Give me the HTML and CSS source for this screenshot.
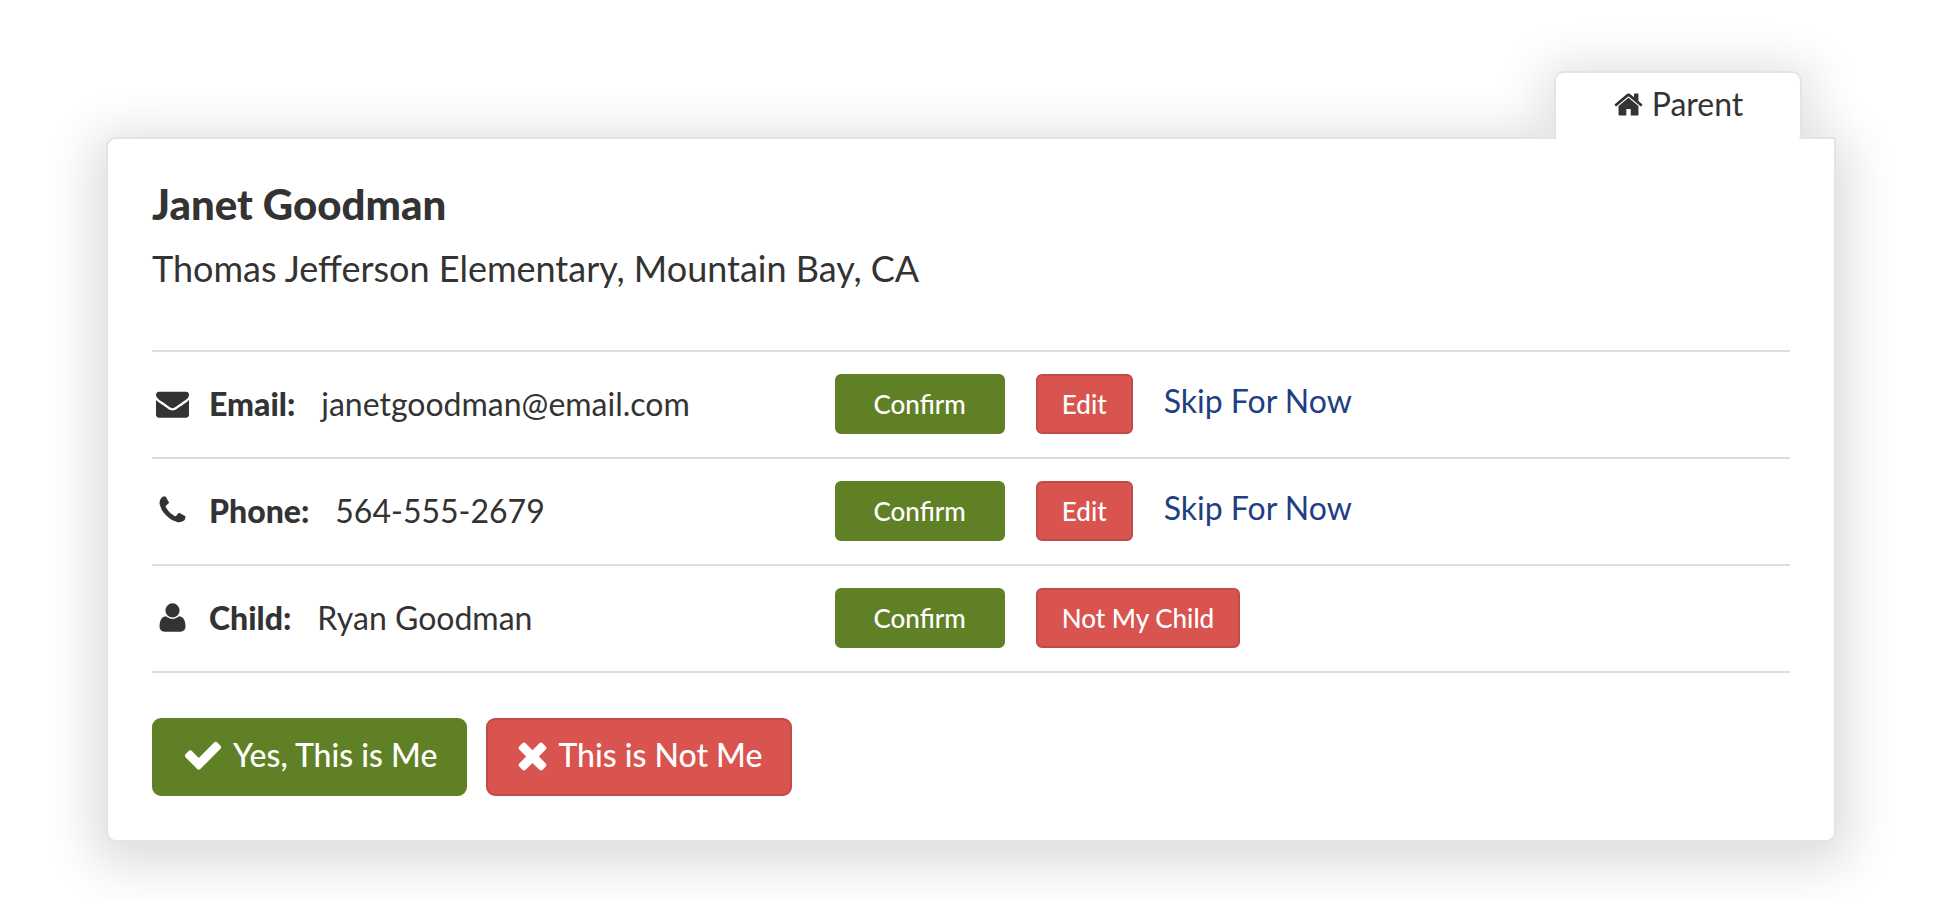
FILE: index.html
```html
<!DOCTYPE html>
<html lang="en">
<head>
<meta charset="utf-8">
<meta name="viewport" content="width=device-width, initial-scale=1">
<title>Confirm your details</title>
<link rel="stylesheet" href="styles.css">
</head>
<body>
<main class="profile">
  <section class="card">
    <h1 class="name">Janet Goodman</h1>
    <p class="school">Thomas Jefferson Elementary, Mountain Bay, CA</p>
    <ul class="details">
      <li class="row">
        <div class="field">
          <svg class="field-icon" viewBox="0 0 1792 1792" aria-hidden="true"><path d="M1792 710v794q0 66-47 113t-113 47h-1472q-66 0-113-47t-47-113v-794q44 49 101 87 362 246 497 345 57 42 92.5 65.5t94.5 48 110 24.5h2q51 0 110-24.5t94.5-48 92.5-65.5q170-123 498-345 57-39 100-87zm0-294q0 79-49 151t-122 123q-376 261-468 325-10 7-42.5 31t-54 38.5-52 32.5-57.5 27-50 9h-2q-23 0-50-9t-57.5-27-52-32.5-54-38.5-42.5-31q-91-64-262-182.5t-205-142.5q-62-42-117-115.5t-55-136.5q0-78 41.5-130t118.5-52h1472q65 0 112.5 47t47.5 113z"/></svg>
          <strong class="label">Email:</strong>
          <span>janetgoodman@email.com</span>
        </div>
        <div class="actions">
          <button class="btn btn-yes btn-wide" type="button">Confirm</button>
          <button class="btn btn-no" type="button">Edit</button>
          <a class="skip" href="#">Skip For Now</a>
        </div>
      </li>
      <li class="row">
        <div class="field">
          <svg class="field-icon" viewBox="0 0 1792 1792" aria-hidden="true"><path d="M1600 1240q0 27-10 70.5t-21 68.5q-21 50-122 106-94 51-186 51-27 0-53-3.5t-57.5-12.5-47-14.5-55.5-20.5-49-18q-98-35-175-83-127-79-264-216t-216-264q-48-77-83-175-3-9-18-49t-20.5-55.5-14.5-47-12.5-57.5-3.5-53q0-92 51-186 56-101 106-122 25-11 68.5-21t70.5-10q14 0 21 3 18 6 53 76 11 19 30 54t35 63.5 31 53.5q3 4 17.5 25t21.5 35.5 7 28.5q0 20-28.5 50t-62 55-62 53-28.5 46q0 9 5 22.5t8.5 20.5 14 24 11.5 19q76 137 174 235t235 174q2 1 19 11.5t24 14 20.5 8.5 22.5 5q18 0 46-28.5t53-62 55-62 50-28.5q14 0 28.5 7t35.5 21.5 25 17.5q25 15 53.5 31t63.5 35 54 30q70 35 76 53 3 7 3 21z"/></svg>
          <strong class="label">Phone:</strong>
          <span>564-555-2679</span>
        </div>
        <div class="actions">
          <button class="btn btn-yes btn-wide" type="button">Confirm</button>
          <button class="btn btn-no" type="button">Edit</button>
          <a class="skip" href="#">Skip For Now</a>
        </div>
      </li>
      <li class="row">
        <div class="field">
          <svg class="field-icon" viewBox="0 0 1792 1792" aria-hidden="true"><path d="M1600 1405q0 120-73 189.500t-194 69.500h-874q-121 0-194-69.500t-73-189.500q0-53 3.500-103.500t14-109 26.500-108.500 43-97.500 62-81 85.500-53.500 111.500-20q9 0 42 21.500t74.500 48 108 48 133.500 21.500 133.500-21.500 108-48 74.500-48 42-21.500q61 0 111.500 20t85.500 53.500 62 81 43 97.500 26.500 108.500 14 109 3.500 103.500zm-320-893q0 159-112.500 271.500t-271.500 112.500-271.500-112.500-112.500-271.500 112.500-271.500 271.500-112.500 271.500 112.500 112.500 271.500z"/></svg>
          <strong class="label">Child:</strong>
          <span>Ryan Goodman</span>
        </div>
        <div class="actions">
          <button class="btn btn-yes btn-wide" type="button">Confirm</button>
          <button class="btn btn-no" type="button">Not My Child</button>
        </div>
      </li>
    </ul>
    <div class="answers">
      <button class="btn btn-large btn-yes" type="button">
        <svg class="check-icon" viewBox="0 0 1792 1792" aria-hidden="true"><path d="M1671 566q0 40-28 68l-724 724-136 136q-28 28-68 28t-68-28l-136-136-362-362q-28-28-28-68t28-68l136-136q28-28 68-28t68 28l294 295 656-657q28-28 68-28t68 28l136 136q28 28 28 68z"/></svg>
        <span>Yes, This is Me</span>
      </button>
      <button class="btn btn-large btn-no" type="button">
        <svg class="cross-icon" viewBox="192 0 1408 1792" aria-hidden="true"><path d="M1490 1322q0 40-28 68l-136 136q-28 28-68 28t-68-28l-294-294-294 294q-28 28-68 28t-68-28l-136-136q-28-28-28-68t28-68l294-294-294-294q-28-28-28-68t28-68l136-136q28-28 68-28t68 28l294 294 294-294q28-28 68-28t68 28l136 136q28 28 28 68t-28 68l-294 294 294 294q28 28 28 68z"/></svg>
        <span>This is Not Me</span>
      </button>
    </div>
  </section>
  <div class="tab">
    <svg class="tab-icon" viewBox="0 0 1792 1792" aria-hidden="true"><path d="M1472 992v480q0 26-19 45t-45 19h-384v-384h-256v384h-384q-26 0-45-19t-19-45v-480q0-1 .5-3t.5-3l575-474 575 474q1 2 1 6zm223-69l-62 74q-8 9-21 11h-3q-13 0-21-7l-692-577-692 577q-12 8-24 7-13-2-21-11l-62-74q-8-10-7-23.500t11-21.500l719-599q32-26 76-26t76 26l244 204v-195q0-14 9-23t23-9h192q14 0 23 9t9 23v408l219 182q10 8 11 21.500t-7 23.500z"/></svg>
    <span>Parent</span>
  </div>
</main>
</body>
</html>
```
FILE: styles.css
```css
* {
  box-sizing: border-box;
}

body {
  margin: 0;
  padding: 71px 107px 59px 106px;
  background: #fff;
  color: #333;
  font-family: Lato, "Open Sans", sans-serif;
  font-size: 32px;
  line-height: 40px;
}

svg {
  display: block;
  flex: none;
  fill: currentColor;
}

/* The tab comes after the card so that it paints over the card's top border. */
.profile {
  display: flex;
  flex-direction: column-reverse;
  isolation: isolate;
}

.tab,
.card {
  position: relative;
  background: #fff;
  border: 2px solid #e4e4e4;
}

/* Shadows sit behind both surfaces so the tab joins the card cleanly. */
.tab::before,
.card::before {
  content: "";
  position: absolute;
  inset: 0;
  z-index: -1;
  border-radius: 8px;
  box-shadow: 0 10px 50px 15px rgba(0, 0, 0, .14);
}

.tab::before {
  bottom: 40px;
}

.tab {
  display: flex;
  align-items: center;
  align-self: flex-end;
  justify-content: center;
  gap: 8px;
  width: 248px;
  height: 68px;
  margin: 0 34px -2px 0;
  padding-bottom: 4px;
  border-bottom: 0;
  border-radius: 10px 10px 4px 4px;
}

.card {
  padding: 41px 44px 44px;
  border-radius: 10px 0 10px 10px;
}

.tab-icon {
  width: 31px;
  height: 31px;
}

.name {
  margin: 0;
  font-size: 42px;
  font-weight: 900;
  line-height: 48px;
}

.school {
  margin: 18px 0 60px;
  font-size: 36px;
  line-height: 44px;
}

.details {
  margin: 0;
  padding: 0;
  list-style: none;
  border-top: 2px solid #ddd;
}

.row {
  display: grid;
  grid-template-columns: 5fr 7fr;
  align-items: center;
  padding: 22px 0 23px;
  border-bottom: 2px solid #ddd;
}

.field,
.actions {
  display: flex;
  align-items: center;
}

.field {
  padding: 0 0 1px 4px;
}

.field-icon {
  width: 33px;
  height: 33px;
  margin-right: 20px;
}

.label {
  margin-right: 26px;
  font-weight: 900;
}

.actions {
  gap: 31px;
}

.btn {
  height: 60px;
  padding: 0 24px;
  border: 2px solid;
  border-radius: 6px;
  color: #fff;
  font: inherit;
  font-size: 26px;
  font-weight: 500;
  cursor: pointer;
}

.btn-wide {
  padding: 0 37px;
}

.btn-yes {
  background: #608026;
  border-color: #608026;
}

.btn-no {
  background: #d9534f;
  border-color: #c24a47;
}

.skip {
  padding-bottom: 7px;
  color: #1f3f83;
  text-decoration: none;
}

.answers {
  display: flex;
  gap: 19px;
  margin-top: 45px;
}

.btn-large {
  display: flex;
  align-items: center;
  gap: 9px;
  height: 78px;
  padding: 0 28px 4px;
  border-radius: 9px;
  font-size: 32px;
}

.check-icon {
  width: 42px;
  height: 42px;
}

.cross-icon {
  width: 33px;
  height: 42px;
}
```
